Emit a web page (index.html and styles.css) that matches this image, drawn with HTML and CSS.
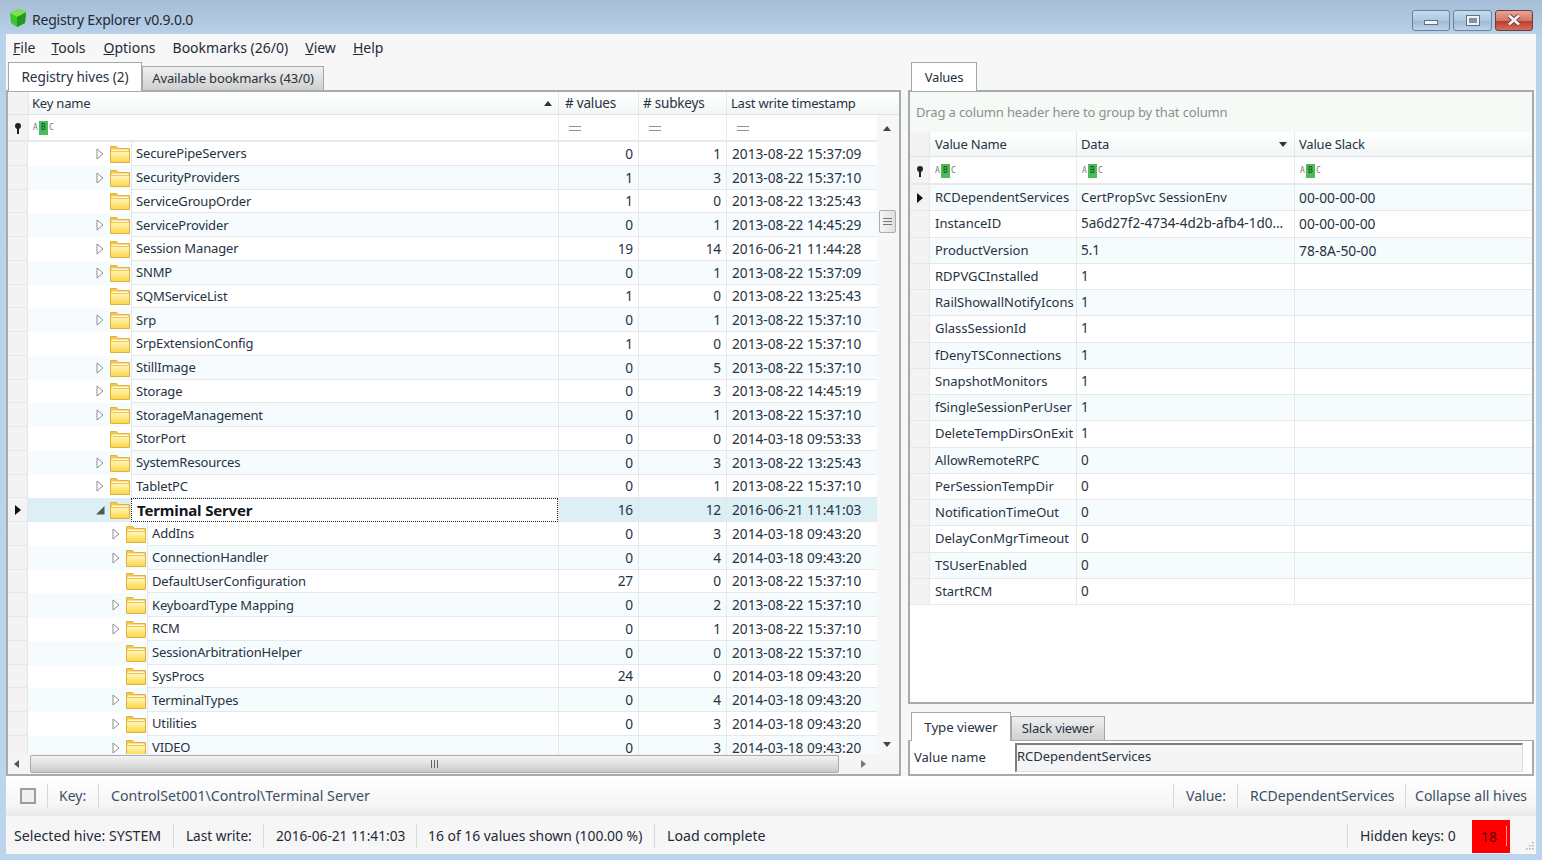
FILE: index.html
```html
<!DOCTYPE html>
<html>
<head>
<meta charset="utf-8">
<title>Registry Explorer v0.9.0.0</title>
<link rel="stylesheet" href="styles.css">
</head>
<body>
<svg class="defs" width="0" height="0">
  <defs>
    <linearGradient id="fbody" x1="0" y1="0" x2="0" y2="1">
      <stop offset="0" stop-color="#fff4b4"/>
      <stop offset="1" stop-color="#fbd84e"/>
    </linearGradient>
  </defs>
  <symbol id="folder" viewBox="0 0 20 18">
    <path d="M.5 17.500V1.500h6l2 2h11v14z" fill="#f3c64f" stroke="#e0b040"/>
    <path d="M1.500 4.500h17v1.500h-17z" fill="#fff8dc"/>
    <path d="M1 7h18v10H1z" fill="url(#fbody)"/>
  </symbol>
  <symbol id="closed" viewBox="0 0 8 12"><path d="M1 1l6 5-6 5z" fill="#fff" stroke="#8d8d8d"/></symbol>
  <symbol id="open" viewBox="0 0 10 10"><path d="M9.500 1v8.500H1z" fill="#555"/></symbol>
  <symbol id="pin" viewBox="0 0 8 11"><path d="M1 3a3 3 0 0 1 6 0c0 1.500-1 2.500-2 3v5H3V6C2 5.500 1 4.500 1 3z" fill="#222"/></symbol>
  <symbol id="current" viewBox="0 0 6 10"><path d="M0 0l6 5-6 5z" fill="#111"/></symbol>
</svg>

<div class="window">
  <header class="titlebar">
    <svg class="app-icon" width="20" height="20" viewBox="0 0 20 20">
      <path d="M2 5l9-4 7 3-1 11-8 4-6-4z" fill="#3fc42c"/>
      <path d="M9 9l9-5-1 11-8 4z" fill="#1f9a1a"/>
      <path d="M2 5l9-4 7 3-9 5z" fill="#7ee04e"/>
    </svg>
    <span class="app-title">Registry Explorer v0.9.0.0</span>
    <div class="controls">
      <span class="ctl"><i class="ico-min"></i></span>
      <span class="ctl wide"><i class="ico-max"></i></span>
      <span class="ctl close"><svg width="16" height="12" viewBox="0 0 16 12"><path d="M3 1.500l10 9M13 1.500l-10 9" stroke="#6b3a34" stroke-width="4.500"/><path d="M3 1.500l10 9M13 1.500l-10 9" stroke="#f2efee" stroke-width="2.800"/></svg></span>
    </div>
  </header>

  <main class="client">
    <nav class="menubar">
      <a class="m-file"><u>F</u>ile</a>
      <a class="m-tools"><u>T</u>ools</a>
      <a class="m-options"><u>O</u>ptions</a>
      <a class="m-book">Bookmarks (26/0)</a>
      <a class="m-view"><u>V</u>iew</a>
      <a class="m-help"><u>H</u>elp</a>
    </nav>

    <div class="panes">
      <section class="left">
        <div class="tabs">
          <span class="tab active hives">Registry hives (2)</span>
          <span class="tab bookmarks">Available bookmarks (43/0)</span>
        </div>
        <div class="grid">
          <div class="tree-head">
            <span class="c-ind"></span>
            <span class="c-key">Key name <em class="sort-up"></em></span>
            <span class="c-val">&#35; values</span>
            <span class="c-sub">&#35; subkeys</span>
            <span class="c-time">Last write timestamp</span>
          </div>
          <div class="grid-main">
            <div class="grid-cols">
              <div class="tree-filter">
                <span class="c-ind"><svg class="pin"><use href="#pin"/></svg></span>
                <span class="c-key"><span class="abc"><i>A</i><b>B</b><i>C</i></span></span>
                <span class="c-val"><i class="eq"></i></span>
                <span class="c-sub"><i class="eq"></i></span>
                <span class="c-time"><i class="eq"></i></span>
              </div>

              <div class="tree-row"><span class="c-ind"></span><span class="c-key lvl1"><svg class="exp"><use href="#closed"/></svg><svg class="fld"><use href="#folder"/></svg><span class="name">SecurePipeServers</span></span><span class="c-val">0</span><span class="c-sub">1</span><span class="c-time">2013-08-22 15:37:09</span></div>
              <div class="tree-row"><span class="c-ind"></span><span class="c-key lvl1"><svg class="exp"><use href="#closed"/></svg><svg class="fld"><use href="#folder"/></svg><span class="name">SecurityProviders</span></span><span class="c-val">1</span><span class="c-sub">3</span><span class="c-time">2013-08-22 15:37:10</span></div>
              <div class="tree-row"><span class="c-ind"></span><span class="c-key lvl1"><span class="exp"></span><svg class="fld"><use href="#folder"/></svg><span class="name">ServiceGroupOrder</span></span><span class="c-val">1</span><span class="c-sub">0</span><span class="c-time">2013-08-22 13:25:43</span></div>
              <div class="tree-row"><span class="c-ind"></span><span class="c-key lvl1"><svg class="exp"><use href="#closed"/></svg><svg class="fld"><use href="#folder"/></svg><span class="name">ServiceProvider</span></span><span class="c-val">0</span><span class="c-sub">1</span><span class="c-time">2013-08-22 14:45:29</span></div>
              <div class="tree-row"><span class="c-ind"></span><span class="c-key lvl1"><svg class="exp"><use href="#closed"/></svg><svg class="fld"><use href="#folder"/></svg><span class="name">Session Manager</span></span><span class="c-val">19</span><span class="c-sub">14</span><span class="c-time">2016-06-21 11:44:28</span></div>
              <div class="tree-row"><span class="c-ind"></span><span class="c-key lvl1"><svg class="exp"><use href="#closed"/></svg><svg class="fld"><use href="#folder"/></svg><span class="name">SNMP</span></span><span class="c-val">0</span><span class="c-sub">1</span><span class="c-time">2013-08-22 15:37:09</span></div>
              <div class="tree-row"><span class="c-ind"></span><span class="c-key lvl1"><span class="exp"></span><svg class="fld"><use href="#folder"/></svg><span class="name">SQMServiceList</span></span><span class="c-val">1</span><span class="c-sub">0</span><span class="c-time">2013-08-22 13:25:43</span></div>
              <div class="tree-row"><span class="c-ind"></span><span class="c-key lvl1"><svg class="exp"><use href="#closed"/></svg><svg class="fld"><use href="#folder"/></svg><span class="name">Srp</span></span><span class="c-val">0</span><span class="c-sub">1</span><span class="c-time">2013-08-22 15:37:10</span></div>
              <div class="tree-row"><span class="c-ind"></span><span class="c-key lvl1"><span class="exp"></span><svg class="fld"><use href="#folder"/></svg><span class="name">SrpExtensionConfig</span></span><span class="c-val">1</span><span class="c-sub">0</span><span class="c-time">2013-08-22 15:37:10</span></div>
              <div class="tree-row"><span class="c-ind"></span><span class="c-key lvl1"><svg class="exp"><use href="#closed"/></svg><svg class="fld"><use href="#folder"/></svg><span class="name">StillImage</span></span><span class="c-val">0</span><span class="c-sub">5</span><span class="c-time">2013-08-22 15:37:10</span></div>
              <div class="tree-row"><span class="c-ind"></span><span class="c-key lvl1"><svg class="exp"><use href="#closed"/></svg><svg class="fld"><use href="#folder"/></svg><span class="name">Storage</span></span><span class="c-val">0</span><span class="c-sub">3</span><span class="c-time">2013-08-22 14:45:19</span></div>
              <div class="tree-row"><span class="c-ind"></span><span class="c-key lvl1"><svg class="exp"><use href="#closed"/></svg><svg class="fld"><use href="#folder"/></svg><span class="name">StorageManagement</span></span><span class="c-val">0</span><span class="c-sub">1</span><span class="c-time">2013-08-22 15:37:10</span></div>
              <div class="tree-row"><span class="c-ind"></span><span class="c-key lvl1"><span class="exp"></span><svg class="fld"><use href="#folder"/></svg><span class="name">StorPort</span></span><span class="c-val">0</span><span class="c-sub">0</span><span class="c-time">2014-03-18 09:53:33</span></div>
              <div class="tree-row"><span class="c-ind"></span><span class="c-key lvl1"><svg class="exp"><use href="#closed"/></svg><svg class="fld"><use href="#folder"/></svg><span class="name">SystemResources</span></span><span class="c-val">0</span><span class="c-sub">3</span><span class="c-time">2013-08-22 13:25:43</span></div>
              <div class="tree-row"><span class="c-ind"></span><span class="c-key lvl1"><svg class="exp"><use href="#closed"/></svg><svg class="fld"><use href="#folder"/></svg><span class="name">TabletPC</span></span><span class="c-val">0</span><span class="c-sub">1</span><span class="c-time">2013-08-22 15:37:10</span></div>
              <div class="tree-row selected"><span class="c-ind"><svg class="cur"><use href="#current"/></svg></span><span class="c-key lvl1"><svg class="exp opened"><use href="#open"/></svg><svg class="fld"><use href="#folder"/></svg><span class="name focus">Terminal Server</span></span><span class="c-val">16</span><span class="c-sub">12</span><span class="c-time">2016-06-21 11:41:03</span></div>
              <div class="tree-row"><span class="c-ind"></span><span class="c-key lvl2"><svg class="exp"><use href="#closed"/></svg><svg class="fld"><use href="#folder"/></svg><span class="name">AddIns</span></span><span class="c-val">0</span><span class="c-sub">3</span><span class="c-time">2014-03-18 09:43:20</span></div>
              <div class="tree-row"><span class="c-ind"></span><span class="c-key lvl2"><svg class="exp"><use href="#closed"/></svg><svg class="fld"><use href="#folder"/></svg><span class="name">ConnectionHandler</span></span><span class="c-val">0</span><span class="c-sub">4</span><span class="c-time">2014-03-18 09:43:20</span></div>
              <div class="tree-row"><span class="c-ind"></span><span class="c-key lvl2"><span class="exp"></span><svg class="fld"><use href="#folder"/></svg><span class="name">DefaultUserConfiguration</span></span><span class="c-val">27</span><span class="c-sub">0</span><span class="c-time">2013-08-22 15:37:10</span></div>
              <div class="tree-row"><span class="c-ind"></span><span class="c-key lvl2"><svg class="exp"><use href="#closed"/></svg><svg class="fld"><use href="#folder"/></svg><span class="name">KeyboardType Mapping</span></span><span class="c-val">0</span><span class="c-sub">2</span><span class="c-time">2013-08-22 15:37:10</span></div>
              <div class="tree-row"><span class="c-ind"></span><span class="c-key lvl2"><svg class="exp"><use href="#closed"/></svg><svg class="fld"><use href="#folder"/></svg><span class="name">RCM</span></span><span class="c-val">0</span><span class="c-sub">1</span><span class="c-time">2013-08-22 15:37:10</span></div>
              <div class="tree-row"><span class="c-ind"></span><span class="c-key lvl2"><span class="exp"></span><svg class="fld"><use href="#folder"/></svg><span class="name">SessionArbitrationHelper</span></span><span class="c-val">0</span><span class="c-sub">0</span><span class="c-time">2013-08-22 15:37:10</span></div>
              <div class="tree-row"><span class="c-ind"></span><span class="c-key lvl2"><span class="exp"></span><svg class="fld"><use href="#folder"/></svg><span class="name">SysProcs</span></span><span class="c-val">24</span><span class="c-sub">0</span><span class="c-time">2014-03-18 09:43:20</span></div>
              <div class="tree-row"><span class="c-ind"></span><span class="c-key lvl2"><svg class="exp"><use href="#closed"/></svg><svg class="fld"><use href="#folder"/></svg><span class="name">TerminalTypes</span></span><span class="c-val">0</span><span class="c-sub">4</span><span class="c-time">2014-03-18 09:43:20</span></div>
              <div class="tree-row"><span class="c-ind"></span><span class="c-key lvl2"><svg class="exp"><use href="#closed"/></svg><svg class="fld"><use href="#folder"/></svg><span class="name">Utilities</span></span><span class="c-val">0</span><span class="c-sub">3</span><span class="c-time">2014-03-18 09:43:20</span></div>
              <div class="tree-row"><span class="c-ind"></span><span class="c-key lvl2"><svg class="exp"><use href="#closed"/></svg><svg class="fld"><use href="#folder"/></svg><span class="name">VIDEO</span></span><span class="c-val">0</span><span class="c-sub">3</span><span class="c-time">2014-03-18 09:43:20</span></div>
            </div>
            <div class="vscroll">
              <i class="arr-up"></i>
              <span class="vthumb"><i></i><i></i><i></i></span>
              <i class="arr-down"></i>
            </div>
          </div>
          <div class="hscroll">
            <i class="arr-left"></i>
            <span class="hthumb"><i></i><i></i><i></i></span>
            <i class="arr-right"></i>
          </div>
        </div>
      </section>

      <section class="right">
        <div class="tabs">
          <span class="tab active values">Values</span>
        </div>
        <div class="values-box">
          <div class="group-hint">Drag a column header here to group by that column</div>
          <div class="val-head">
            <span class="v-ind"></span>
            <span class="v-name">Value Name</span>
            <span class="v-data">Data <em class="sort-down"></em></span>
            <span class="v-slack">Value Slack</span>
          </div>
          <div class="val-filter">
            <span class="v-ind"><svg class="pin"><use href="#pin"/></svg></span>
            <span class="v-name"><span class="abc"><i>A</i><b>B</b><i>C</i></span></span>
            <span class="v-data"><span class="abc"><i>A</i><b>B</b><i>C</i></span></span>
            <span class="v-slack"><span class="abc"><i>A</i><b>B</b><i>C</i></span></span>
          </div>
          <div class="val-row"><span class="v-ind"><svg class="cur"><use href="#current"/></svg></span><span class="v-name">RCDependentServices</span><span class="v-data">CertPropSvc SessionEnv</span><span class="v-slack">00-00-00-00</span></div>
          <div class="val-row"><span class="v-ind"></span><span class="v-name">InstanceID</span><span class="v-data hex">5a6d27f2-4734-4d2b-afb4-1d0…</span><span class="v-slack">00-00-00-00</span></div>
          <div class="val-row"><span class="v-ind"></span><span class="v-name">ProductVersion</span><span class="v-data hex">5.1</span><span class="v-slack">78-8A-50-00</span></div>
          <div class="val-row"><span class="v-ind"></span><span class="v-name">RDPVGCInstalled</span><span class="v-data hex">1</span><span class="v-slack"></span></div>
          <div class="val-row"><span class="v-ind"></span><span class="v-name">RailShowallNotifyIcons</span><span class="v-data hex">1</span><span class="v-slack"></span></div>
          <div class="val-row"><span class="v-ind"></span><span class="v-name">GlassSessionId</span><span class="v-data hex">1</span><span class="v-slack"></span></div>
          <div class="val-row"><span class="v-ind"></span><span class="v-name">fDenyTSConnections</span><span class="v-data hex">1</span><span class="v-slack"></span></div>
          <div class="val-row"><span class="v-ind"></span><span class="v-name">SnapshotMonitors</span><span class="v-data hex">1</span><span class="v-slack"></span></div>
          <div class="val-row"><span class="v-ind"></span><span class="v-name">fSingleSessionPerUser</span><span class="v-data hex">1</span><span class="v-slack"></span></div>
          <div class="val-row"><span class="v-ind"></span><span class="v-name">DeleteTempDirsOnExit</span><span class="v-data hex">1</span><span class="v-slack"></span></div>
          <div class="val-row"><span class="v-ind"></span><span class="v-name">AllowRemoteRPC</span><span class="v-data hex">0</span><span class="v-slack"></span></div>
          <div class="val-row"><span class="v-ind"></span><span class="v-name">PerSessionTempDir</span><span class="v-data hex">0</span><span class="v-slack"></span></div>
          <div class="val-row"><span class="v-ind"></span><span class="v-name">NotificationTimeOut</span><span class="v-data hex">0</span><span class="v-slack"></span></div>
          <div class="val-row"><span class="v-ind"></span><span class="v-name">DelayConMgrTimeout</span><span class="v-data hex">0</span><span class="v-slack"></span></div>
          <div class="val-row"><span class="v-ind"></span><span class="v-name">TSUserEnabled</span><span class="v-data hex">0</span><span class="v-slack"></span></div>
          <div class="val-row"><span class="v-ind"></span><span class="v-name">StartRCM</span><span class="v-data hex">0</span><span class="v-slack"></span></div>
        </div>
        <div class="tabs lower">
          <span class="tab active type">Type viewer</span>
          <span class="tab slack">Slack viewer</span>
        </div>
        <div class="viewer-box">
          <label class="viewer-label">Value name</label>
          <div class="viewer-input">RCDependentServices</div>
        </div>
      </section>
    </div>

    <div class="keybar">
      <span class="check-wrap"><i class="check"></i></span>
      <span class="kb kb-key">Key:</span>
      <span class="kb kb-path">ControlSet001\Control\Terminal Server</span>
      <span class="kb kb-value">Value:</span>
      <span class="kb kb-name">RCDependentServices</span>
      <span class="kb kb-collapse">Collapse all hives</span>
    </div>

    <footer class="statusbar">
      <span class="st st-hive">Selected hive: SYSTEM</span>
      <span class="st st-last">Last write:</span>
      <span class="st st-date">2016-06-21 11:41:03</span>
      <span class="st st-shown">16 of 16 values shown (100.00 %)</span>
      <span class="st st-load">Load complete</span>
      <span class="st st-hidden">Hidden keys: 0</span>
      <span class="st-count">18</span>
      <svg class="grip" width="10" height="10" viewBox="0 0 10 10"><path d="M8 1h1.500v1.500H8zM5 4h1.500v1.500H5zM8 4h1.500v1.500H8zM2 7h1.500v1.500H2zM5 7h1.500v1.500H5zM8 7h1.500v1.500H8z" fill="#aab0b4"/></svg>
    </footer>
  </main>
</div>
</body>
</html>
```

FILE: styles.css
```css
* {
    box-sizing: border-box;
}
html, body {
    margin: 0;
    height: 100%;
}
body {
    font-family: "Noto Sans", sans-serif;
    font-size: 13px;
    color: #26323f;
    overflow: hidden;
}
.defs {
    position: absolute;
}
.window {
    width: 1542px;
    height: 860px;
    display: flex;
    flex-direction: column;
    background: linear-gradient(#a6bdd6 0, #bad3eb 40px, #bcd5ee 100%);
}

/* title bar */
.titlebar {
    height: 34px;
    flex: none;
    display: flex;
    align-items: center;
    padding: 0 9px 0 8px;
}
.app-icon {
    margin-right: 4px;
    margin-top: 2px;
}
.app-title {
    font-size: 14px;
    letter-spacing: -0.2px;
    margin-top: 5px;
    color: #1f2a36;
}
.controls {
    margin-left: auto;
    display: flex;
    gap: 3px;
    margin-top: 6px;
}
.ctl {
    width: 38px;
    height: 21px;
    display: flex;
    align-items: center;
    justify-content: center;
    border: 1px solid #6c7f97;
    border-radius: 3px;
    background: linear-gradient(#c9dcee, #adc7e0 50%, #9ab8d6 52%, #bdd4ea);
}
.ctl.wide {
    width: 39px;
}
.ctl.close {
    border-color: #6e3a3a;
    background: linear-gradient(#e7a598, #d47766 50%, #bd3a26 52%, #d2705e);
}
.ico-min {
    width: 14px;
    height: 5px;
    margin-top: 5px;
    background: #f3f6f9;
    border: 1px solid #5f6e80;
}
.ico-max {
    width: 12px;
    height: 9px;
    background: #7e90a8;
    border: 2px solid #eef2f6;
    outline: 1px solid #5f6e80;
}

/* client area */
.client {
    flex: 1;
    min-height: 0;
    margin: 0 6px 6px;
    display: flex;
    flex-direction: column;
    background: #f7f7f7;
}
.menubar {
    height: 28px;
    flex: none;
    display: flex;
    align-items: center;
    padding-bottom: 2px;
    font-size: 14px;
    color: #1f2a36;
}
.menubar a {
    white-space: nowrap;
}
.m-file { margin-left: 7px; }
.m-tools { margin-left: 16px; }
.m-options { margin-left: 18px; }
.m-book { margin-left: 17px; }
.m-view { margin-left: 17px; }
.m-help { margin-left: 17px; }

.panes {
    flex: none;
    height: 714px;
    display: flex;
    gap: 7px;
}

/* tabs */
.tabs {
    height: 28px;
    flex: none;
    display: flex;
    align-items: flex-end;
    padding-left: 2px;
    position: relative;
    z-index: 1;
}
.tab {
    height: 24px;
    display: flex;
    align-items: center;
    justify-content: center;
    padding-bottom: 2px;
    font-size: 13px;
    letter-spacing: -0.05px;
    border: 1px solid #a3a8a8;
    border-bottom: none;
    background: linear-gradient(#f1f1f1, #dcdcdc 60%, #cfcfcf);
    color: #26323f;
}
.tab.active {
    height: 29px;
    margin-bottom: -1px;
    background: linear-gradient(#fff, #fff);
}
.hives { width: 134px; font-size: 13.6px; }
.bookmarks { width: 182px; letter-spacing: -0.15px; }
.values { width: 66px; margin-left: 1px; letter-spacing: -0.2px; padding-bottom: 0; }
.type { width: 100px; margin-left: 1px; font-size: 13.3px; padding-bottom: 0; }
.slack { width: 94px; letter-spacing: -0.15px; }

/* left grid */
.left {
    width: 895px;
    display: flex;
    flex-direction: column;
}
.grid {
    flex: 1;
    min-height: 0;
    display: flex;
    flex-direction: column;
    border: 2px solid #a6abab;
    background: #f8f8f8;
}
.tree-head, .tree-filter, .tree-row {
    display: grid;
    grid-template-columns: 20px 530px 80px 88px 151px;
}
.tree-head {
    height: 23px;
    flex: none;
    grid-template-columns: 20px 530px 80px 88px 1fr;
    align-items: stretch;
    background: linear-gradient(#fff, #f3f6f6);
    border-bottom: 1px solid #dfe3e3;
    letter-spacing: -0.2px;
}
.tree-head span {
    display: flex;
    align-items: center;
    padding-left: 4px;
    border-left: 1px solid #e4e7e7;
    position: relative;
}
.tree-head .c-key {
    padding-left: 3px;
}
.tree-head .c-val {
    padding-left: 6px;
    font-size: 13.5px;
}
.tree-head .c-sub {
    font-size: 13.5px;
}
.tree-head .c-ind {
    border-left: none;
    background: #f3f3f3;
}
.sort-up {
    position: absolute;
    right: 6px;
    top: 9px;
    border: 4px solid transparent;
    border-top: none;
    border-bottom: 5px solid #333;
}
.sort-down {
    position: absolute;
    right: 7px;
    top: 10px;
    border: 4px solid transparent;
    border-bottom: none;
    border-top: 5px solid #333;
}
.grid-main {
    flex: 1;
    min-height: 0;
    display: flex;
}
.grid-cols {
    width: 869px;
    flex: none;
    overflow: hidden;
    background: #fff;
}
.tree-filter {
    height: 27px;
    border-bottom: 2px solid #e6e9e9;
}
.tree-filter span {
    display: flex;
    align-items: center;
    padding-top: 1px;
    border-left: 1px solid #e9ecec;
}
.tree-filter .c-key {
    padding-left: 4px;
}
.tree-filter .c-key .abc {
    padding-top: 0;
    border-left: none;
}
.tree-filter .c-val, .tree-filter .c-sub, .tree-filter .c-time {
    padding-left: 10px;
}
.tree-filter .c-ind, .val-filter .v-ind {
    justify-content: center;
    border-left: none;
    background: #f3f3f3;
}
.pin {
    width: 8px;
    height: 11px;
}
.eq {
    width: 12px;
    height: 5px;
    border-top: 1px solid #8f9498;
    border-bottom: 1px solid #8f9498;
}
.abc {
    display: flex;
    align-items: center;
    font: 8px/12px "DejaVu Sans Mono", monospace;
    color: #777;
}
.abc i {
    font-style: normal;
    width: 5px;
    text-align: center;
}
.abc b {
    font-weight: normal;
    width: 9px;
    height: 14px;
    margin: 0 1px;
    line-height: 14px;
    text-align: center;
    color: #12481a;
    background: #4cbb5a;
}

/* tree rows */
.tree-row {
    height: 23.76px;
    letter-spacing: -0.15px;
}
.tree-row:nth-child(odd) {
    background: #f6fbfd;
}
.tree-row span {
    display: flex;
    align-items: center;
}
.tree-row .c-ind {
    background: #f3f3f3;
    justify-content: center;
    border-bottom: 1px solid #e5e8e8;
    border-right: 1px solid #e5e8e8;
}
.cur {
    width: 6px;
    height: 10px;
}
.c-key.lvl1 {
    padding-left: 68px;
}
.c-key.lvl2 {
    padding-left: 84px;
}
.exp {
    width: 8px;
    height: 12px;
    flex: none;
    margin-right: 6px;
}
.exp.opened {
    width: 10px;
    height: 10px;
    margin: 0 5px 0 -1px;
}
.fld {
    width: 20px;
    height: 18px;
    flex: none;
}
.name {
    flex: 1;
    height: 100%;
    margin-left: 1px;
    padding-left: 4px;
    border-left: 1px solid #e5e8e8;
    border-bottom: 1px solid #e5e8e8;
    white-space: nowrap;
}
.tree-row .c-val, .tree-row .c-sub {
    justify-content: flex-end;
    padding-right: 5px;
    font-size: 13.7px;
    border-left: 1px solid #e5e8e8;
    border-bottom: 1px solid #e5e8e8;
}
.tree-row .c-time {
    padding-left: 5px;
    border-left: 1px solid #e5e8e8;
    border-bottom: 1px solid #e5e8e8;
    font-size: 13.7px;
    letter-spacing: 0;
}
.tree-row.selected {
    background: #dceff5;
}
.tree-row.selected .name.focus {
    background: #fff;
    font-weight: bold;
    color: #0e1620;
    font-size: 15px;
    padding-left: 5px;
    border: 1px dotted #222;
}

/* scrollbars */
.vscroll {
    flex: 1;
    display: flex;
    flex-direction: column;
    align-items: center;
    padding-right: 2px;
    background: #f7f7f7;
}
.arr-up {
    margin-top: 11px;
    border: 4px solid transparent;
    border-top: none;
    border-bottom: 5px solid #444;
}
.arr-down {
    margin-top: auto;
    margin-bottom: 7px;
    border: 4px solid transparent;
    border-bottom: none;
    border-top: 5px solid #444;
}
.vthumb {
    width: 17px;
    height: 23px;
    margin-top: 79px;
    display: flex;
    flex-direction: column;
    align-items: center;
    justify-content: center;
    gap: 2px;
    border: 1px solid #a9adad;
    border-radius: 2px;
    background: linear-gradient(90deg, #f6f6f6, #dedede);
}
.vthumb i {
    width: 9px;
    height: 1px;
    background: #777;
}
.hscroll {
    height: 20px;
    flex: none;
    display: flex;
    align-items: center;
    background: #f5f5f5;
}
.arr-left {
    margin-left: 6px;
    border: 4px solid transparent;
    border-left: none;
    border-right: 5px solid #555;
}
.arr-right {
    margin-left: 22px;
    border: 4px solid transparent;
    border-right: none;
    border-left: 5px solid #777;
}
.hthumb {
    width: 809px;
    height: 18px;
    margin-left: 11px;
    display: flex;
    align-items: center;
    justify-content: center;
    gap: 2px;
    border: 1px solid #a9adad;
    border-radius: 2px;
    background: linear-gradient(#f3f3f3, #dcdcdc 60%, #c9c9c9);
}
.hthumb i {
    width: 1px;
    height: 8px;
    background: #666;
}

/* right pane */
.right {
    width: 626px;
    display: flex;
    flex-direction: column;
}
.values-box {
    height: 614px;
    flex: none;
    border: 2px solid #a6abab;
    background: #fff;
}
.group-hint {
    height: 40px;
    display: flex;
    align-items: center;
    padding-left: 6px;
    letter-spacing: -0.15px;
    color: #8a9090;
    background: #f5faf6;
}
.val-head, .val-filter, .val-row {
    display: grid;
    grid-template-columns: 19px 147px 218px 1fr;
}
.val-head {
    height: 25px;
    letter-spacing: -0.2px;
    background: linear-gradient(#fff, #f3f6f6);
    border-bottom: 1px solid #dfe3e3;
}
.val-head span {
    display: flex;
    align-items: center;
    padding-left: 5px;
    border-left: 1px solid #e4e7e7;
    position: relative;
}
.val-head .v-data, .val-head .v-slack {
    padding-left: 4px;
}
.val-head .v-ind {
    border-left: none;
    background: #f3f3f3;
}
.val-filter {
    height: 28px;
    border-bottom: 2px solid #e6e9e9;
}
.val-filter span {
    display: flex;
    align-items: center;
    padding-left: 5px;
    padding-top: 2px;
    border-left: 1px solid #e9ecec;
}
.val-filter .abc {
    padding: 0;
    border-left: none;
}
.val-filter .v-ind {
    padding-left: 0;
}
.val-row {
    height: 26.27px;
}
.val-row:nth-child(even) {
    background: #f6fbfd;
}
.val-row span {
    display: block;
    line-height: 25px;
    padding-left: 5px;
    overflow: hidden;
    white-space: nowrap;
    border-left: 1px solid #e5e8e8;
    border-bottom: 1px solid #e5e8e8;
}
.val-row .v-data, .val-row .v-slack {
    padding-left: 4px;
}
.val-row .v-ind {
    display: flex;
    align-items: center;
    justify-content: center;
    padding-left: 0;
    border-left: none;
    background: #f3f3f3;
}
.val-row .v-slack {
    font-size: 13.8px;
}
.val-row .hex {
    font-size: 13.5px;
}
.tabs.lower {
    margin-top: 7px;
    height: 29px;
}
.viewer-box {
    height: 36px;
    flex: none;
    display: flex;
    align-items: center;
    border: 2px solid #a6abab;
    border-top: 1px solid #a6abab;
    background: #fff;
    padding-left: 4px;
}
.viewer-label {
    width: 101px;
    margin-top: -2px;
}
.viewer-input {
    width: 508px;
    height: 29px;
    line-height: 23px;
    background: #f5f5f5;
    border: 1px solid #dcdfdf;
    border-top: 2px solid #7d8080;
    border-left: 2px solid #7d8080;
}

/* key bar */
.keybar {
    height: 40px;
    flex: none;
    display: flex;
    align-items: center;
    color: #3c4e66;
    background: linear-gradient(#fff, #f6f6f6 70%, #e9e9e9);
    font-size: 14px;
}
.check-wrap {
    width: 41px;
    padding-left: 14px;
    display: flex;
}
.check {
    width: 16px;
    height: 16px;
    border: 2px solid #9a9d9d;
    background: #efefef;
}
.kb {
    height: 24px;
    line-height: 24px;
    padding-left: 11px;
    border-left: 1px solid #d8d8d8;
    white-space: nowrap;
}
.kb-key { width: 51px; }
.kb-path { padding-left: 12px; font-size: 14.2px; }
.kb-value { margin-left: auto; width: 64px; padding-left: 12px; }
.kb-name { width: 168px; padding-left: 12px; }
.kb-collapse { padding-left: 9px; padding-right: 9px; }

/* status bar */
.statusbar {
    height: 36px;
    flex: none;
    margin-top: 2px;
    display: flex;
    align-items: center;
    color: #1f2a36;
    font-size: 14.2px;
    background: #f6f6f6;
}
.st {
    height: 24px;
    line-height: 24px;
    white-space: nowrap;
    padding-left: 12px;
    border-left: 1px solid #d8d8d8;
}
.st-hive { width: 167px; padding-left: 8px; border-left: none; }
.st-last { width: 90px; font-size: 13.6px; }
.st-date { width: 153px; font-size: 13.7px; }
.st-shown { width: 238px; font-size: 13.9px; padding-left: 11px; }
.st-hidden { margin-left: auto; width: 120px; font-size: 14px; }
.st-count {
    width: 38px;
    height: 33px;
    line-height: 33px;
    padding-left: 9px;
    font-size: 14px;
    color: #5a0000;
    margin-left: 5px;
    background: linear-gradient(#f99, #f99) 34px 6px / 1px 20px no-repeat #f00;
}
.grip {
    margin: 20px 2px 0 14px;
}
```
